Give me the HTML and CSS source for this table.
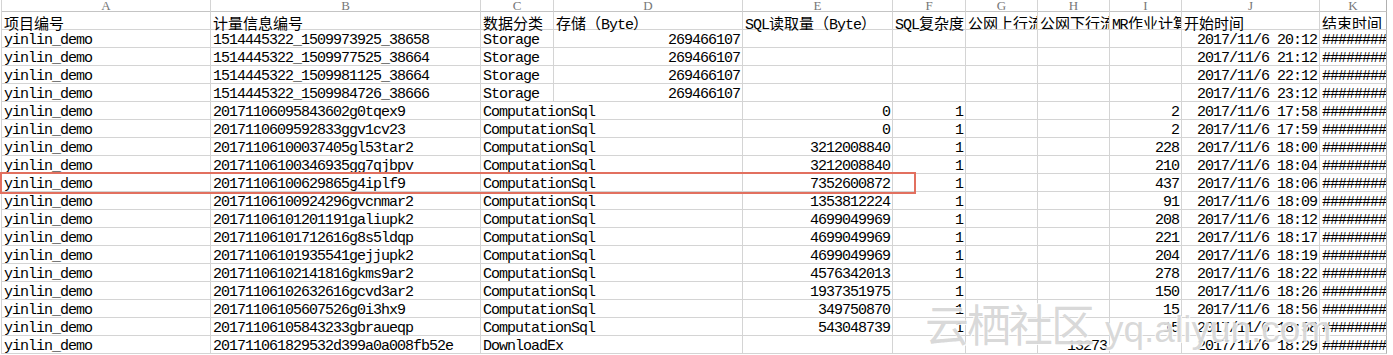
FILE: index.html
```html
<!DOCTYPE html>
<html lang="zh-CN">
<head>
<meta charset="utf-8">
<title>计量信息</title>
<link rel="stylesheet" href="styles.css">
</head>
<body>
<div class="page">
<div class="sheet">
  <div class="l">A</div><div class="l">B</div><div class="l">C</div><div class="l">D</div><div class="l">E</div><div class="l">F</div><div class="l">G</div><div class="l">H</div><div class="l">I</div><div class="l">J</div><div class="l k">K</div>

  <div class="c"><span class="cjk">项目编号</span></div><div class="c"><span class="cjk">计量信息编号</span></div><div class="c"><span class="cjk">数据分类</span></div><div class="c"><span class="cjk">存储（</span>Byte<span class="cjk">）</span></div><div class="c">SQL<span class="cjk">读取量（</span>Byte<span class="cjk">）</span></div><div class="c">SQL<span class="cjk">复杂度</span></div><div class="c clip"><span class="cjk">公网上行流量</span></div><div class="c clip"><span class="cjk">公网下行流量</span></div><div class="c clip"><span class="mr">MR</span><span class="cjk">作业计算量</span></div><div class="c"><span class="cjk">开始时间</span></div><div class="c k clip"><span class="cjk">结束时间</span></div>

  <div class="c">yinlin_demo</div><div class="c">1514445322_1509973925_38658</div><div class="c">Storage</div><div class="c n">269466107</div><div class="c"></div><div class="c"></div><div class="c"></div><div class="c"></div><div class="c"></div><div class="c n">2017/11/6 20:12</div><div class="c k clip">########</div>
  <div class="c">yinlin_demo</div><div class="c">1514445322_1509977525_38664</div><div class="c">Storage</div><div class="c n">269466107</div><div class="c"></div><div class="c"></div><div class="c"></div><div class="c"></div><div class="c"></div><div class="c n">2017/11/6 21:12</div><div class="c k clip">########</div>
  <div class="c">yinlin_demo</div><div class="c">1514445322_1509981125_38664</div><div class="c">Storage</div><div class="c n">269466107</div><div class="c"></div><div class="c"></div><div class="c"></div><div class="c"></div><div class="c"></div><div class="c n">2017/11/6 22:12</div><div class="c k clip">########</div>
  <div class="c">yinlin_demo</div><div class="c">1514445322_1509984726_38666</div><div class="c">Storage</div><div class="c n">269466107</div><div class="c"></div><div class="c"></div><div class="c"></div><div class="c"></div><div class="c"></div><div class="c n">2017/11/6 23:12</div><div class="c k clip">########</div>
  <div class="c">yinlin_demo</div><div class="c">20171106095843602g0tqex9</div><div class="c sp2">ComputationSql</div><div class="c n">0</div><div class="c n">1</div><div class="c"></div><div class="c"></div><div class="c n">2</div><div class="c n">2017/11/6 17:58</div><div class="c k clip">########</div>
  <div class="c">yinlin_demo</div><div class="c">2017110609592833ggv1cv23</div><div class="c sp2">ComputationSql</div><div class="c n">0</div><div class="c n">1</div><div class="c"></div><div class="c"></div><div class="c n">2</div><div class="c n">2017/11/6 17:59</div><div class="c k clip">########</div>
  <div class="c">yinlin_demo</div><div class="c">20171106100037405gl53tar2</div><div class="c sp2">ComputationSql</div><div class="c n">3212008840</div><div class="c n">1</div><div class="c"></div><div class="c"></div><div class="c n">228</div><div class="c n">2017/11/6 18:00</div><div class="c k clip">########</div>
  <div class="c">yinlin_demo</div><div class="c">20171106100346935gg7qjbpv</div><div class="c sp2">ComputationSql</div><div class="c n">3212008840</div><div class="c n">1</div><div class="c"></div><div class="c"></div><div class="c n">210</div><div class="c n">2017/11/6 18:04</div><div class="c k clip">########</div>
  <div class="c">yinlin_demo</div><div class="c">20171106100629865g4iplf9</div><div class="c sp2">ComputationSql</div><div class="c n">7352600872</div><div class="c n">1</div><div class="c"></div><div class="c"></div><div class="c n">437</div><div class="c n">2017/11/6 18:06</div><div class="c k clip">########</div>
  <div class="c">yinlin_demo</div><div class="c">20171106100924296gvcnmar2</div><div class="c sp2">ComputationSql</div><div class="c n">1353812224</div><div class="c n">1</div><div class="c"></div><div class="c"></div><div class="c n">91</div><div class="c n">2017/11/6 18:09</div><div class="c k clip">########</div>
  <div class="c">yinlin_demo</div><div class="c">20171106101201191galiupk2</div><div class="c sp2">ComputationSql</div><div class="c n">4699049969</div><div class="c n">1</div><div class="c"></div><div class="c"></div><div class="c n">208</div><div class="c n">2017/11/6 18:12</div><div class="c k clip">########</div>
  <div class="c">yinlin_demo</div><div class="c">20171106101712616g8s5ldqp</div><div class="c sp2">ComputationSql</div><div class="c n">4699049969</div><div class="c n">1</div><div class="c"></div><div class="c"></div><div class="c n">221</div><div class="c n">2017/11/6 18:17</div><div class="c k clip">########</div>
  <div class="c">yinlin_demo</div><div class="c">20171106101935541gejjupk2</div><div class="c sp2">ComputationSql</div><div class="c n">4699049969</div><div class="c n">1</div><div class="c"></div><div class="c"></div><div class="c n">204</div><div class="c n">2017/11/6 18:19</div><div class="c k clip">########</div>
  <div class="c">yinlin_demo</div><div class="c">20171106102141816gkms9ar2</div><div class="c sp2">ComputationSql</div><div class="c n">4576342013</div><div class="c n">1</div><div class="c"></div><div class="c"></div><div class="c n">278</div><div class="c n">2017/11/6 18:22</div><div class="c k clip">########</div>
  <div class="c">yinlin_demo</div><div class="c">20171106102632616gcvd3ar2</div><div class="c sp2">ComputationSql</div><div class="c n">1937351975</div><div class="c n">1</div><div class="c"></div><div class="c"></div><div class="c n">150</div><div class="c n">2017/11/6 18:26</div><div class="c k clip">########</div>
  <div class="c">yinlin_demo</div><div class="c">20171106105607526g0i3hx9</div><div class="c sp2">ComputationSql</div><div class="c n">349750870</div><div class="c n">1</div><div class="c"></div><div class="c"></div><div class="c n">15</div><div class="c n">2017/11/6 18:56</div><div class="c k clip">########</div>
  <div class="c">yinlin_demo</div><div class="c">20171106105843233gbraueqp</div><div class="c sp2">ComputationSql</div><div class="c n">543048739</div><div class="c n">1</div><div class="c"></div><div class="c"></div><div class="c n">15</div><div class="c n">2017/11/6 18:58</div><div class="c k clip">########</div>
  <div class="c">yinlin_demo</div><div class="c">201711061829532d399a0a008fb52e</div><div class="c sp2">DownloadEx</div><div class="c"></div><div class="c"></div><div class="c"></div><div class="c n">13273</div><div class="c"></div><div class="c n">2017/11/6 18:29</div><div class="c k clip">########</div>
</div>
<div class="highlight"></div>
<div class="watermark"><span class="wm-cn">云栖社区</span><span class="wm-en">yq.aliyun.com</span></div>
</div>
</body>
</html>
```

FILE: styles.css
```css
html, body {
  margin: 0;
  padding: 0;
  background: #ffffff;
}

.page {
  position: relative;
  width: 1393px;
  height: 355px;
  overflow: hidden;
}

.sheet {
  display: grid;
  grid-template-columns: 209px 270px 73px 189px 150px 73px 72px 72px 72px 138px 67px;
  grid-template-rows: 12px;
  grid-auto-rows: 18px;
  width: max-content;
  margin-left: 1px;
  border-left: 1px solid #d4d4d4;
  font-family: "Liberation Mono", "Noto Sans CJK SC", monospace;
  font-size: 15px;
  letter-spacing: -1px;
  color: #000000;
}

.l {
  height: 12px;
  box-sizing: border-box;
  border-right: 1px solid #d4d4d4;
  border-bottom: 1px solid #c4c4c4;
  font-family: "Liberation Serif", serif;
  font-size: 13px;
  letter-spacing: 0;
  line-height: 11px;
  text-align: center;
  color: #777777;
}

.c {
  box-sizing: border-box;
  height: 18px;
  border-right: 1px solid #d4d4d4;
  border-bottom: 1px solid #d4d4d4;
  padding: 2px 2px 0 2px;
  line-height: 17px;
  white-space: nowrap;
}

.n {
  text-align: right;
}

.sp2 {
  grid-column: span 2;
}

.clip {
  overflow: hidden;
}

.k {
  border-right-color: #b0b0b0;
}

.cjk {
  font-family: "Noto Sans CJK SC", sans-serif;
  letter-spacing: 0;
}

.mr {
  letter-spacing: -1.5px;
  margin-right: 1px;
}

.highlight {
  position: absolute;
  left: 0;
  top: 172px;
  width: 916px;
  height: 22px;
  box-sizing: border-box;
  border: 2px solid #e2705f;
}

.watermark {
  position: absolute;
  left: 925px;
  top: 298px;
  white-space: nowrap;
  color: rgba(170, 170, 170, 0.45);
  text-shadow: 1px 1px 0 rgba(255, 255, 255, 0.9), -1px -1px 0 rgba(255, 255, 255, 0.9);
  line-height: 50px;
}

.wm-cn {
  font-family: "Noto Sans CJK SC", sans-serif;
  font-size: 44px;
  letter-spacing: -2px;
}

.wm-en {
  margin-left: 12px;
  font-family: "Liberation Sans", sans-serif;
  font-size: 37px;
}
```
